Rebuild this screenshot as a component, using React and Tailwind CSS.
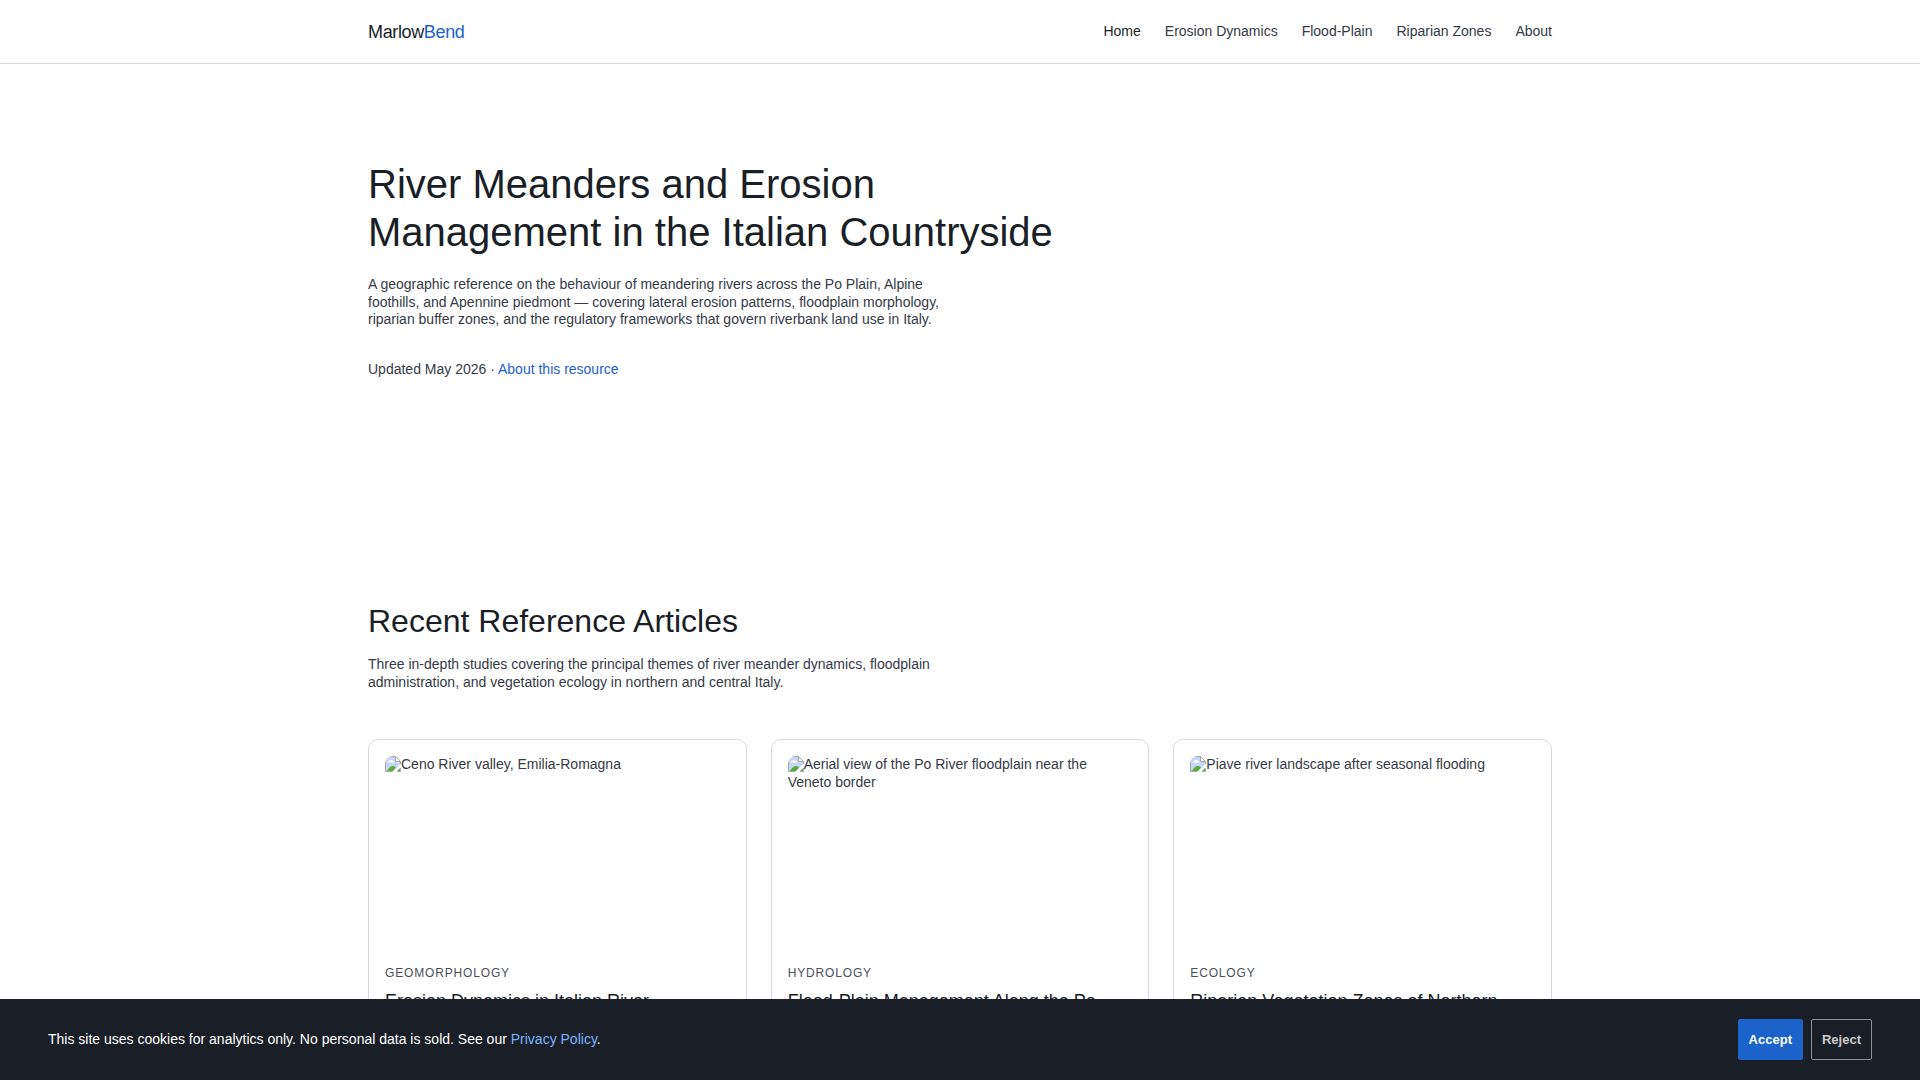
import React from 'react';

const navLinks = ['Home', 'Erosion Dynamics', 'Flood-Plain', 'Riparian Zones', 'About'];

const articles = [
  {
    tag: 'Geomorphology',
    title: 'Erosion Dynamics in Italian River',
    caption: 'Ceno River valley, Emilia-Romagna',
  },
  {
    tag: 'Hydrology',
    title: 'Flood-Plain Management Along the Po',
    caption: 'Aerial view of the Po River floodplain near the Veneto border',
  },
  {
    tag: 'Ecology',
    title: 'Riparian Vegetation Zones of Northern',
    caption: 'Piave river landscape after seasonal flooding',
  },
];

const MissingImageIcon = () => (
  <svg className="inline-block h-4 w-4 align-text-bottom" viewBox="0 0 16 16" aria-hidden="true">
    <path d="M1 1h9.5L15 5.5V15H1z" fill="#c6d6f7" />
    <path d="M3 6.500c0-1.300 1-1.900 1.900-1.700.6-1.100 2.700-.9 3 .5 1 0 1.400.6 1.400 1.200z" fill="#fff" />
    <path d="M2 15c1.500-3 3.500-5 6-5 1.300 0 2.300.6 3 1.500L8 15z" fill="#57ad35" />
    <path d="M12 15l3-3v3z" fill="#57ad35" />
    <path d="M7.500 16 16 7.500v3.500L11 16z" fill="#fff" />
    <path d="M10.500 1v4.500H15z" fill="#fff" />
    <path
      d="M7.500 15.500h-7V.5h10l5 5V8M10.500.5v5h5M15.500 12v3.500H12"
      fill="none"
      stroke="#a6a6a6"
    />
  </svg>
);

const ArticleCard = ({ article }) => (
  <article className="rounded-[10px] border border-[#d9dadc] p-4 pb-8">
    <div className="mb-4 aspect-video overflow-hidden rounded-lg">
      <MissingImageIcon />
      {article.caption}
    </div>
    <p className="mb-2 text-xs leading-tight tracking-[0.07em] text-[#4a4f5a] uppercase">{article.tag}</p>
    <h3 className="text-lg leading-6 text-[#1a1e26]">{article.title}</h3>
  </article>
);

const CookieBar = () => (
  <div className="fixed inset-x-0 bottom-0 flex items-center justify-between bg-[#1a1e26] px-12 py-5 text-white">
    <p>
      This site uses cookies for analytics only. No personal data is sold. See our{' '}
      <a href="#privacy" className="text-[#7ab3ff]">Privacy Policy</a>.
    </p>
    <div className="flex gap-2 text-[13px] leading-[15px] font-bold">
      <button className="rounded-xs border border-[#1c62cb] bg-[#1c62cb] px-[10px] py-3">Accept</button>
      <button className="rounded-xs border border-[#8b8f98] px-[10px] py-3 text-[#cccccc]">Reject</button>
    </div>
  </div>
);

const App = () => {
  return (
    <div className="min-h-screen bg-white font-['Liberation_Sans',Arial,sans-serif] text-sm leading-tight text-[#353a45]">
      <header className="border-b border-[#d9dadc]">
        <div className="mx-auto flex h-[63px] max-w-7xl items-center justify-between px-12">
          <a href="#home" className="text-lg leading-6 tracking-[-0.02em] text-[#1a1e26]">
            Marlow<span className="text-[#1c62cb]">Bend</span>
          </a>
          <nav className="flex gap-6">
            {navLinks.map((label, i) => (
              <a key={label} href={`#${label}`} className={i === 0 ? 'text-[#1a1e26]' : ''}>
                {label}
              </a>
            ))}
          </nav>
        </div>
      </header>

      <main className="mx-auto max-w-7xl px-12">
        <section className="py-24">
          <h1 className="mb-5 max-w-[720px] text-[40px] leading-[48px] text-[#1a1e26]">
            River Meanders and Erosion Management in the Italian Countryside
          </h1>
          <p className="mb-8 max-w-xl">
            A geographic reference on the behaviour of meandering rivers across the Po Plain, Alpine
            foothills, and Apennine piedmont — covering lateral erosion patterns, floodplain
            morphology, riparian buffer zones, and the regulatory frameworks that govern riverbank
            land use in Italy.
          </p>
          <p>
            Updated May 2026 · <a href="#about" className="text-[#1c62cb]">About this resource</a>
          </p>
        </section>

        <section className="pt-32 pb-4">
          <h2 className="mb-4 text-[32px] leading-[38px] text-[#1a1e26]">Recent Reference Articles</h2>
          <p className="mb-12 max-w-xl">
            Three in-depth studies covering the principal themes of river meander dynamics,
            floodplain administration, and vegetation ecology in northern and central Italy.
          </p>
          <div className="grid grid-cols-3 gap-6">
            {articles.map((article) => (
              <ArticleCard key={article.tag} article={article} />
            ))}
          </div>
        </section>
      </main>

      <CookieBar />
    </div>
  );
};

export default App;
